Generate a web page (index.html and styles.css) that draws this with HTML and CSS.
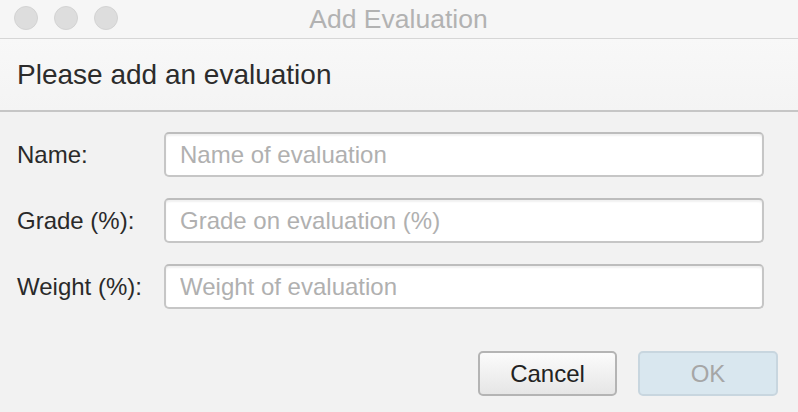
FILE: index.html
```html
<!DOCTYPE html>
<html>
<head>
<meta charset="utf-8">
<link rel="stylesheet" href="styles.css">
</head>
<body>
<div class="window">
  <div class="titlebar">
    <div class="lights">
      <span class="light"></span>
      <span class="light"></span>
      <span class="light"></span>
    </div>
    <div class="title">Add Evaluation</div>
  </div>
  <div class="header">Please add an evaluation</div>
  <div class="body">
    <div class="form">
      <label class="label">Name:</label>
      <input class="field" type="text" placeholder="Name of evaluation">
      <label class="label">Grade (%):</label>
      <input class="field" type="text" placeholder="Grade on evaluation (%)">
      <label class="label">Weight (%):</label>
      <input class="field" type="text" placeholder="Weight of evaluation">
    </div>
    <div class="actions">
      <button class="btn cancel">Cancel</button>
      <button class="btn ok">OK</button>
    </div>
  </div>
</div>
</body>
</html>
```
FILE: styles.css
```css
html, body {
  margin: 0;
  padding: 0;
  width: 798px;
  height: 412px;
  overflow: hidden;
  background: #f2f2f2;
  font-family: "Liberation Sans", Arial, sans-serif;
}
.window {
  display: flex;
  flex-direction: column;
  height: 412px;
}
.titlebar {
  position: relative;
  height: 38px;
  border-bottom: 1px solid #d6d6d6;
  background: #f6f6f6;
  display: flex;
  align-items: center;
  justify-content: center;
}
.lights {
  position: absolute;
  left: 14px;
  top: 6px;
  display: flex;
  gap: 16px;
}
.light {
  width: 22px;
  height: 22px;
  border-radius: 50%;
  background: #dddddd;
  border: 1px solid #d3d3d3;
}
.title {
  font-size: 26.5px;
  color: #b2b2b2;
  line-height: 38px;
  margin-left: -1px;
}
.header {
  height: 73px;
  border-bottom: 2px solid #c6c6c6;
  background: linear-gradient(#f8f8f8, #f4f4f4);
  display: flex;
  align-items: center;
  padding-left: 17px;
  padding-top: 1px;
  box-sizing: border-box;
  font-size: 28px;
  color: #2c2c2c;
}
.body {
  padding: 20px 20px 0 17px;
  display: flex;
  flex-direction: column;
}
.form {
  display: grid;
  grid-template-columns: 147px 600px;
  grid-auto-rows: 45px;
  row-gap: 21px;
  align-items: center;
}
.label {
  font-size: 24px;
  color: #2a2a2a;
}
.field {
  height: 45px;
  box-sizing: border-box;
  border: 2px solid #c6c6c6;
  border-top-color: #bdbdbd;
  border-radius: 5px;
  background: #ffffff;
  box-shadow: inset 0 2px 2px rgba(0, 0, 0, 0.06);
  padding: 0 14px;
  font-family: "Liberation Sans", Arial, sans-serif;
  font-size: 24px;
  color: #2a2a2a;
  outline: none;
}
.field::placeholder {
  color: #b0b0b0;
}
.actions {
  margin-top: 42px;
  display: flex;
  justify-content: flex-end;
  gap: 21px;
}
.btn {
  height: 45px;
  box-sizing: border-box;
  border-radius: 5px;
  font-family: "Liberation Sans", Arial, sans-serif;
  font-size: 24px;
  padding: 0;
}
.cancel {
  width: 139px;
  border: 2px solid #b4b4b4;
  background: linear-gradient(#fbfbfb, #e6e6e6);
  color: #222222;
}
.ok {
  width: 140px;
  border: 2px solid #c8d6df;
  background: #d9e7ef;
  color: #a6a6a6;
}
```
